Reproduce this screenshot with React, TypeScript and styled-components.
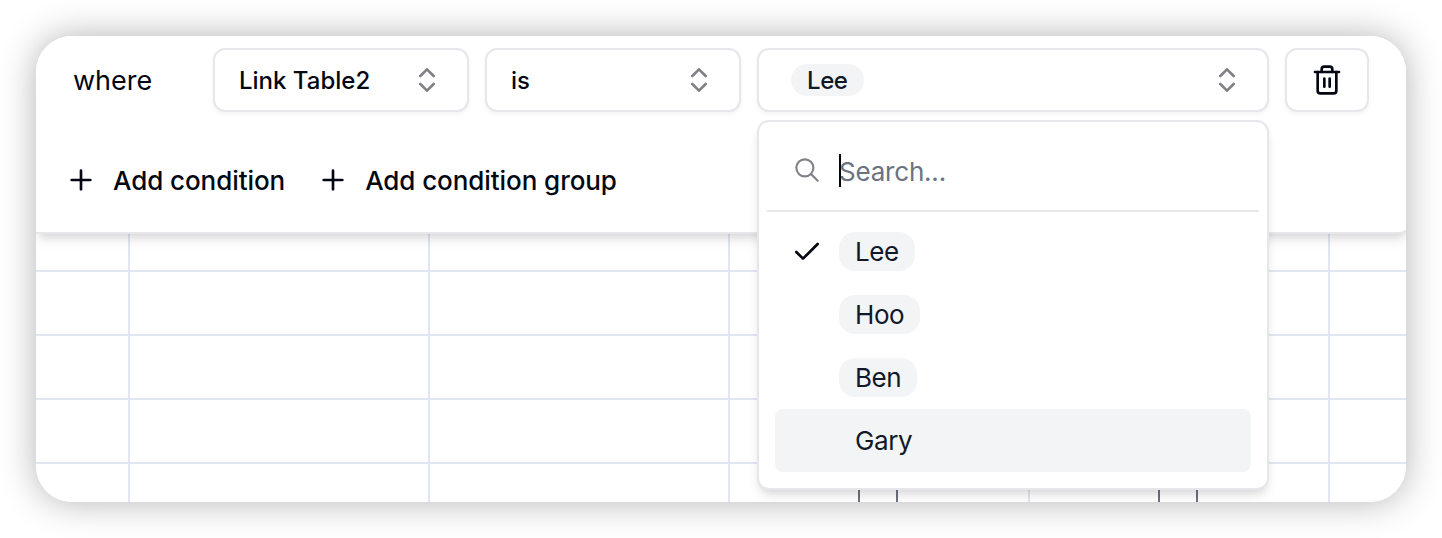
import React from 'react';
import styled, { createGlobalStyle } from 'styled-components';
import { Check, ChevronsUpDown, Plus, Trash2 } from 'lucide-react';

const GlobalStyle = createGlobalStyle`
  * { box-sizing: border-box; }
  body { margin: 0; background: #fff; font-family: Inter, sans-serif; color: #030712; }
  button { font: inherit; color: inherit; margin: 0; }
`;

const Stage = styled.main`
  width: 1442px;
  height: 538px;
  padding: 36px;
  overflow: hidden;
`;

const Shadow = styled.div`
  width: 1370px;
  height: 466px;
  border-radius: 36px;
  box-shadow: 0 0 36px rgba(0, 0, 0, 0.3);
`;

const Window = styled.div`
  display: flex;
  flex-direction: column;
  height: 100%;
  border-radius: 36px;
  overflow: hidden;
  background: #fff;
`;

const FilterPanel = styled.section`
  position: relative;
  z-index: 1;
  flex: none;
  height: 198px;
  margin-right: -4px;
  padding: 12px 37px 0;
  background: #fff;
  border-bottom: 2px solid #e5e7eb;
  border-bottom-right-radius: 12px;
  box-shadow: 0 8px 12px -2px rgba(0, 0, 0, 0.1), 0 4px 8px -4px rgba(0, 0, 0, 0.1);
`;

const ConditionRow = styled.div`
  display: flex;
  gap: 16px;
  height: 64px;
`;

const Where = styled.span`
  width: 124px;
  font-size: 27px;
  line-height: 66px;
`;

const Anchor = styled.div`
  position: relative;
`;

const SelectButton = styled.button<{ $width: number; $inset?: number }>`
  display: flex;
  align-items: center;
  justify-content: space-between;
  width: ${(p) => p.$width}px;
  height: 64px;
  padding: 0 24px 0 ${(p) => p.$inset ?? 24}px;
  border: 2px solid #e5e7eb;
  border-radius: 12px;
  background: #fff;
  box-shadow: 0 2px 4px rgba(0, 0, 0, 0.05);
  font-size: 24px;
  font-weight: 500;

  svg { opacity: 0.5; }
`;

const IconButton = styled.button`
  display: grid;
  place-items: center;
  width: 84px;
  height: 64px;
  padding: 0;
  border: 2px solid #e5e7eb;
  border-radius: 12px;
  background: #fff;
  box-shadow: 0 2px 4px rgba(0, 0, 0, 0.05);
`;

const Tag = styled.span<{ $height: number; $plain?: boolean; $shift?: number }>`
  height: ${(p) => p.$height}px;
  padding: 0 16px;
  border-radius: 16px;
  background: ${(p) => (p.$plain ? 'transparent' : '#f3f4f6')};
  color: #111827;
  letter-spacing: -0.4px;
  line-height: ${(p) => p.$height + (p.$shift ?? 0)}px;
`;

const ActionRow = styled.div`
  display: flex;
  gap: 32px;
  margin-top: 51px;
  margin-left: -8px;
`;

const AddButton = styled.button`
  display: flex;
  align-items: center;
  gap: 16px;
  height: 34px;
  padding: 0;
  border: 0;
  background: none;
  font-size: 26px;
  font-weight: 500;
  letter-spacing: -0.07px;
`;

const Menu = styled.div`
  position: absolute;
  top: 72px;
  left: 0;
  width: 512px;
  height: 370px;
  padding: 8px;
  border: 2px solid #e5e7eb;
  border-radius: 12px;
  background: #fff;
  box-shadow: 0 8px 12px -2px rgba(0, 0, 0, 0.1), 0 4px 8px -4px rgba(0, 0, 0, 0.1);
`;

const SearchRow = styled.div`
  display: flex;
  align-items: center;
  gap: 16px;
  height: 82px;
  padding: 0 24px;
  border-bottom: 2px solid #e5e7eb;

  svg { opacity: 0.5; }
`;

const SearchField = styled.span`
  position: relative;
  padding-top: 4px;
  color: #6b7280;
  font-size: 26px;
  letter-spacing: -0.2px;
  line-height: 40px;
`;

const TextCursor = styled.i`
  position: absolute;
  left: 0;
  top: 6px;
  width: 2px;
  height: 33px;
  background: #030712;
`;

const Options = styled.div`
  padding: 8px;
`;

const Option = styled.div<{ $active?: boolean }>`
  display: flex;
  align-items: center;
  gap: 16px;
  height: 63px;
  padding: 0 16px;
  border-radius: 8px;
  background: ${(p) => (p.$active ? '#f3f4f6' : 'transparent')};
  font-size: 26px;
`;

const IconSlot = styled.span`
  display: flex;
  width: 32px;
  height: 32px;
`;

const Sheet = styled.div`
  flex: 1;
`;

const columns = [92, 392, 692, 992, 1292];
const rows = [36, 100, 164, 228];
const cellMarks = [822, 860, 1122, 1160];

function SearchIcon() {
  return (
    <svg width="32" height="32" viewBox="0 0 15 15" fill="none" stroke="currentColor">
      <circle cx="6.5" cy="6.5" r="4" />
      <path d="M9.4 9.4l3.1 3.1" strokeLinecap="round" />
    </svg>
  );
}

function Grid() {
  return (
    <svg width="1370" height="268" viewBox="0 0 1370 268" shapeRendering="crispEdges">
      {rows.map((y) => <rect key={y} x="0" y={y} width="1370" height="2" fill="#e1e7f0" />)}
      {columns.map((x) => <rect key={x} x={x} y="0" width="2" height="268" fill="#e1e7f0" />)}
      {cellMarks.map((x) => <rect key={x} x={x} y="240" width="2" height="28" fill="#6b7280" />)}
    </svg>
  );
}

const options = ['Lee', 'Hoo', 'Ben', 'Gary'];

export default function App() {
  return (
    <>
      <GlobalStyle />
      <Stage>
        <Shadow>
          <Window>
            <FilterPanel>
              <ConditionRow>
                <Where>where</Where>
                <SelectButton $width={256}>Link Table2<ChevronsUpDown size={32} /></SelectButton>
                <SelectButton $width={256}>is<ChevronsUpDown size={32} /></SelectButton>
                <Anchor>
                  <SelectButton $width={512} $inset={32}>
                    <Tag $height={32} $shift={2}>Lee</Tag>
                    <ChevronsUpDown size={32} />
                  </SelectButton>
                  <Menu>
                    <SearchRow>
                      <SearchIcon />
                      <SearchField>Search...<TextCursor /></SearchField>
                    </SearchRow>
                    <Options>
                      {options.map((name) => (
                        <Option key={name} $active={name === 'Gary'}>
                          <IconSlot>{name === 'Lee' && <Check size={32} />}</IconSlot>
                          <Tag $height={39} $shift={1} $plain={name === 'Gary'}>{name}</Tag>
                        </Option>
                      ))}
                    </Options>
                  </Menu>
                </Anchor>
                <IconButton><Trash2 size={32} /></IconButton>
              </ConditionRow>
              <ActionRow>
                <AddButton><Plus size={32} />Add condition</AddButton>
                <AddButton><Plus size={32} />Add condition group</AddButton>
              </ActionRow>
            </FilterPanel>
            <Sheet><Grid /></Sheet>
          </Window>
        </Shadow>
      </Stage>
    </>
  );
}
